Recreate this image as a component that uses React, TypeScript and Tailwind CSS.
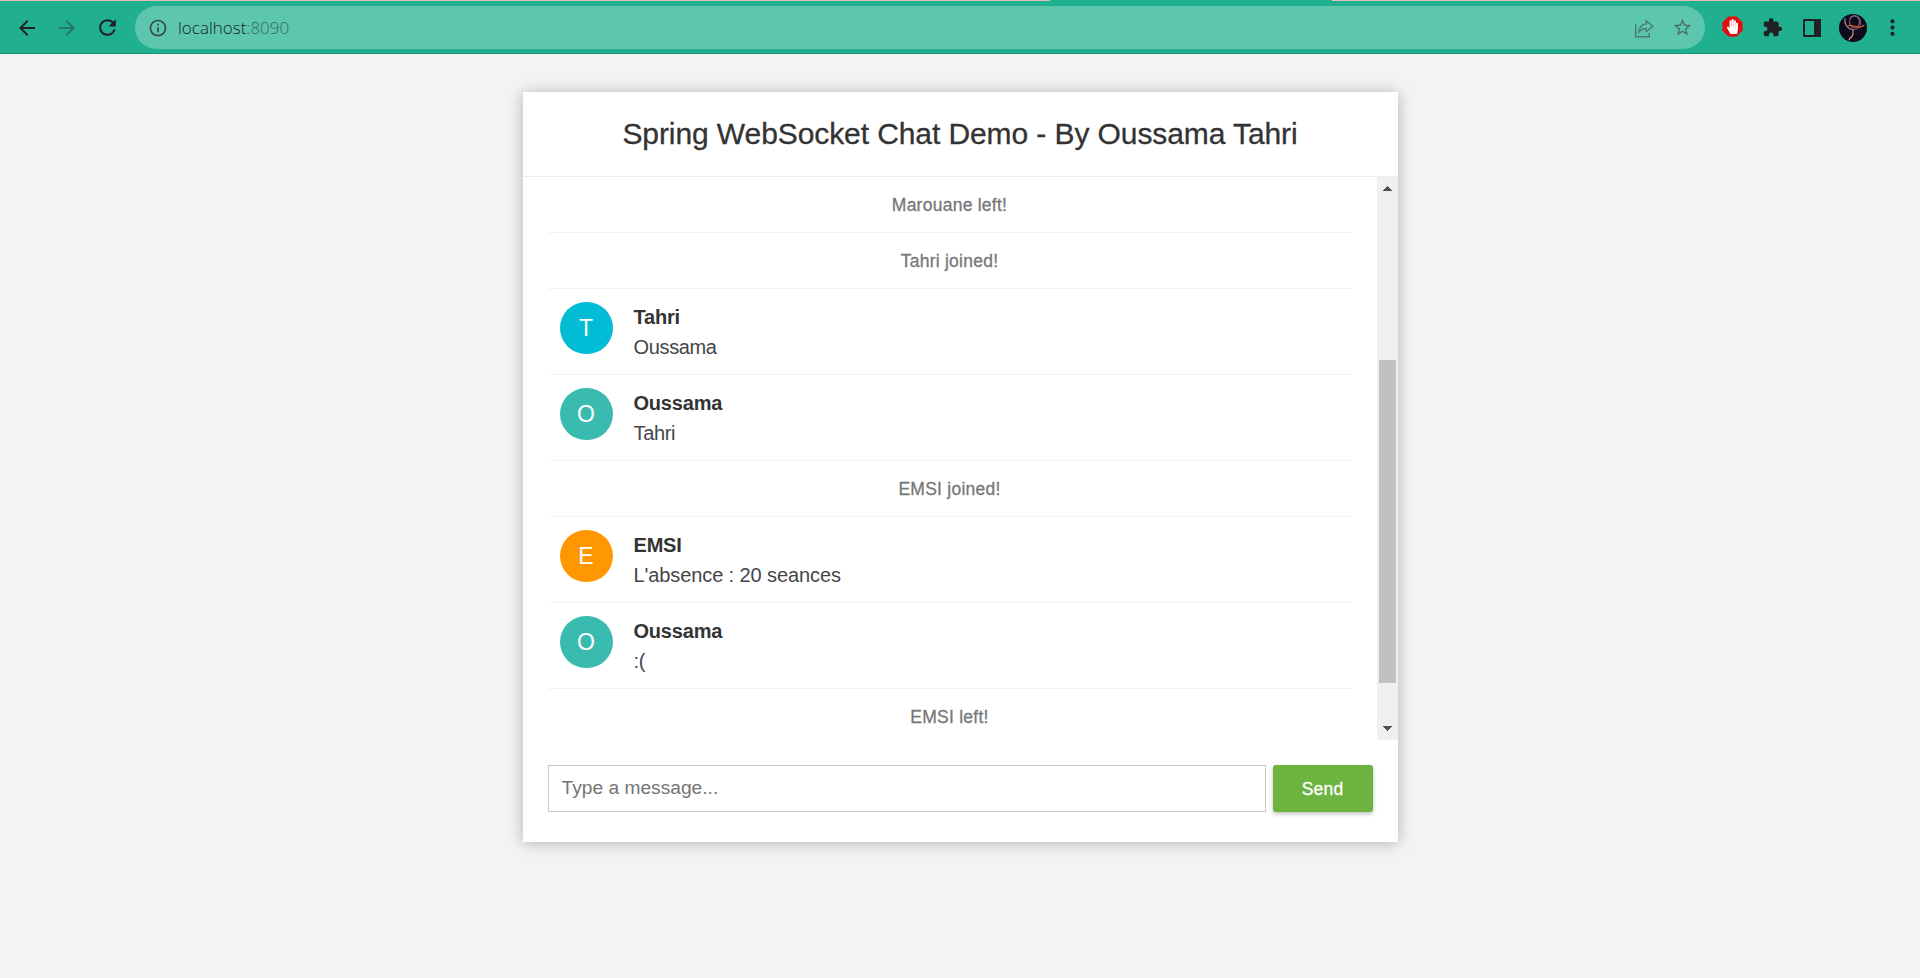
import React from "react";
import { MdArrowBack, MdArrowForward, MdRefresh, MdInfoOutline, MdExtension, MdStarBorder, MdMoreVert } from "react-icons/md";
import { FaHandPaper } from "react-icons/fa";

type Item =
  | { kind: "event"; text: string }
  | { kind: "chat"; name: string; text: string; color: string };

const items: Item[] = [
  { kind: "event", text: "Marouane left!" },
  { kind: "event", text: "Tahri joined!" },
  { kind: "chat", name: "Tahri", text: "Oussama", color: "bg-[#00bcd4]" },
  { kind: "chat", name: "Oussama", text: "Tahri", color: "bg-[#39bbb0]" },
  { kind: "event", text: "EMSI joined!" },
  { kind: "chat", name: "EMSI", text: "L'absence : 20 seances", color: "bg-[#ff9800]" },
  { kind: "chat", name: "Oussama", text: ":(", color: "bg-[#39bbb0]" },
  { kind: "event", text: "EMSI left!" },
];

function ShareIcon() {
  return (
    <svg width="20" height="20" viewBox="0 0 20 20" fill="none" stroke="currentColor" strokeWidth="1.4" className="mt-0.5 text-[#4a7a70]">
      <path d="M1.7 5v12.700h13.600V14" />
      <path d="M12.300 1.800 18.800 7.300l-6.500 5.300V9.500C8.600 9.500 6.500 10.800 4.900 13.200 5.200 8.800 7.700 5.300 12.300 4.900z" />
    </svg>
  );
}

function AdBlockIcon() {
  return (
    <span className="grid size-[21px] place-items-center">
      <svg width="21" height="21" viewBox="0 0 21 21" className="col-start-1 row-start-1">
        <path d="M6.300.5h8.400l5.900 5.900v8.200l-5.900 5.900H6.300L.4 14.600V6.400z" fill="#e40d0d" />
      </svg>
      <FaHandPaper preserveAspectRatio="none" className="col-start-1 row-start-1 h-[15px] w-[11px] text-white" />
    </span>
  );
}

function SidePanelIcon() {
  return (
    <svg width="18" height="18" viewBox="0 0 18 18" fill="#202124" fillRule="evenodd">
      <path d="M0 0h18v18H0zM2 2v14h9V2z" />
    </svg>
  );
}

function Avatar() {
  return (
    <svg width="28" height="28" viewBox="0 0 28 28" fill="none">
      <circle cx="14" cy="14" r="14" fill="#0d0a1c" />
      <g strokeWidth="1.1" strokeLinecap="round">
        <path d="M6 4.500C5.500 8 7 12 10 14.200c1.500 1 3 1.500 4.500 1.300" stroke="#9a9a96" />
        <ellipse cx="15.500" cy="7.800" rx="5" ry="6" stroke="#a5564c" />
        <path d="M11 4c2-2.500 6-3 8.500-.5 1.500 1.500 2 4 1.500 6" stroke="#7b6aa0" />
        <path d="M14.500 15.500c4 0 7-2.500 7.500-6.500" stroke="#8a4a86" />
        <path d="M9.500 11.500c4-.8 8 2.500 12 1.500 2-.4 3-1 3.500-2" stroke="#e0622e" />
        <path d="M14 15.500c.3 2.500.3 5-1 7-1 1-2.300 1.500-3 3.300" stroke="#d9a28a" />
      </g>
    </svg>
  );
}

function Toolbar() {
  return (
    <header className="flex h-[54px] flex-col border-b border-[#1b9579] bg-[#21b08f]">
      <div className="flex h-px shrink-0">
        <div className="w-[1050px] bg-[#e3bdbb]" />
        <div className="w-[282px]" />
        <div className="flex-1 bg-[#e3bdbb]" />
      </div>
      <div className="flex flex-1 items-center pt-px pl-[15px] text-[#202124]">
        <MdArrowBack size={24} />
        <MdArrowForward size={24} className="ml-4 text-[#247867]" />
        <MdRefresh size={25} className="ml-4" />
        <div className="ml-[15px] flex h-[43px] w-[1570px] items-center rounded-full bg-[#5dc6af] pr-3 pl-[13px]">
          <MdInfoOutline size={20} className="text-[#37474a]" />
          <span className="ml-2.5 flex-1 text-[17px] font-light text-[#202124] [font-family:'Open_Sans','Noto_Sans',sans-serif]">
            localhost<span className="text-[#30695f]">:8090</span>
          </span>
          <ShareIcon />
          <MdStarBorder size={21} className="ml-[18px] text-[#4a6f69]" />
        </div>
        <div className="flex items-center pl-[17px]">
          <span className="-mt-0.5"><AdBlockIcon /></span>
          <MdExtension size={21} className="ml-[19px]" />
          <span className="ml-5"><SidePanelIcon /></span>
          <span className="ml-[18px]"><Avatar /></span>
          <MdMoreVert size={25} className="ml-[13px]" />
        </div>
      </div>
    </header>
  );
}

function Scrollbar() {
  return (
    <div className="flex w-[21px] shrink-0 flex-col items-center bg-[#f0f0f0]">
      <svg width="9" height="5" viewBox="0 0 9 5" className="mt-[9px] shrink-0" fill="#505050" shapeRendering="crispEdges">
        <path d="M4 0h1v1h1v1h1v1h1v1h1v1H0V4h1V3h1V2h1V1h1z" />
      </svg>
      <div className="mt-[169px] h-[323px] w-[17px] shrink-0 bg-[#c1c1c1]" />
      <svg width="9" height="5" viewBox="0 0 9 5" className="mt-[43px] shrink-0" fill="#505050" shapeRendering="crispEdges">
        <path d="M0 0h9v1H8v1H7v1H6v1H5v1H4V4H3V3H2V2H1V1H0z" />
      </svg>
    </div>
  );
}

function Row({ item }: { item: Item }) {
  if (item.kind === "event") {
    return (
      <li className="flex h-14 shrink-0 items-center justify-center border-b border-[#f3f3f3] pt-0.5 text-[17.5px] tracking-[0.25px] text-[#777] [-webkit-text-stroke:0.3px_#777]">
        {item.text}
      </li>
    );
  }
  return (
    <li className="flex h-[86px] shrink-0 border-b border-[#f3f3f3] pt-[13px] pl-3">
      <div className={"flex h-[52px] w-[53px] items-center justify-center rounded-full text-[23px] text-white " + item.color}>
        {item.name[0]}
      </div>
      <div className="ml-[21px] text-xl leading-[30px] tracking-[-0.2px]">
        <div className="font-bold text-[#333]">{item.name}</div>
        <p className={item.text.includes(" ") ? "tracking-[-0.1px] text-[#43464b]" : "tracking-[-0.35px] text-[#43464b]"}>{item.text}</p>
      </div>
    </li>
  );
}

export default function App() {
  return (
    <div className="h-[978px] overflow-hidden bg-[#f3f3f3] [font-family:'Liberation_Sans',Arial,sans-serif]">
      <Toolbar />
      <main className="mx-auto mt-[38px] flex h-[750px] w-[875px] flex-col bg-white shadow-[0_1px_14px_rgba(0,0,0,0.27)]">
        <h2 className="flex h-[85px] shrink-0 items-center justify-center border-b border-[#ececec] pb-0.5 text-[30px] tracking-[-0.09px] text-[#333] [-webkit-text-stroke:0.3px_#333]">
          Spring WebSocket Chat Demo - By Oussama Tahri
        </h2>
        <div className="flex h-[563px] shrink-0">
          <ul className="flex flex-1 flex-col overflow-hidden px-[25px]">
            {items.map((item, i) => (
              <Row key={i} item={item} />
            ))}
          </ul>
          <Scrollbar />
        </div>
        <form className="mt-[25px] flex h-[47px] items-stretch px-[25px]">
          <input
            placeholder="Type a message..."
            className="w-[718px] border border-[#c8c8c8] pr-3 pl-[13px] text-[19.2px] text-[#333] outline-none placeholder:text-[#757575]"
          />
          <button type="button" className="ml-[7px] w-[100px] rounded-[3px] bg-[#6db33f] pt-px text-[17.5px] tracking-[0.2px] text-white shadow-[0_2px_4px_rgba(0,0,0,0.25)] [-webkit-text-stroke:0.3px_#fff]">
            Send
          </button>
        </form>
      </main>
    </div>
  );
}
